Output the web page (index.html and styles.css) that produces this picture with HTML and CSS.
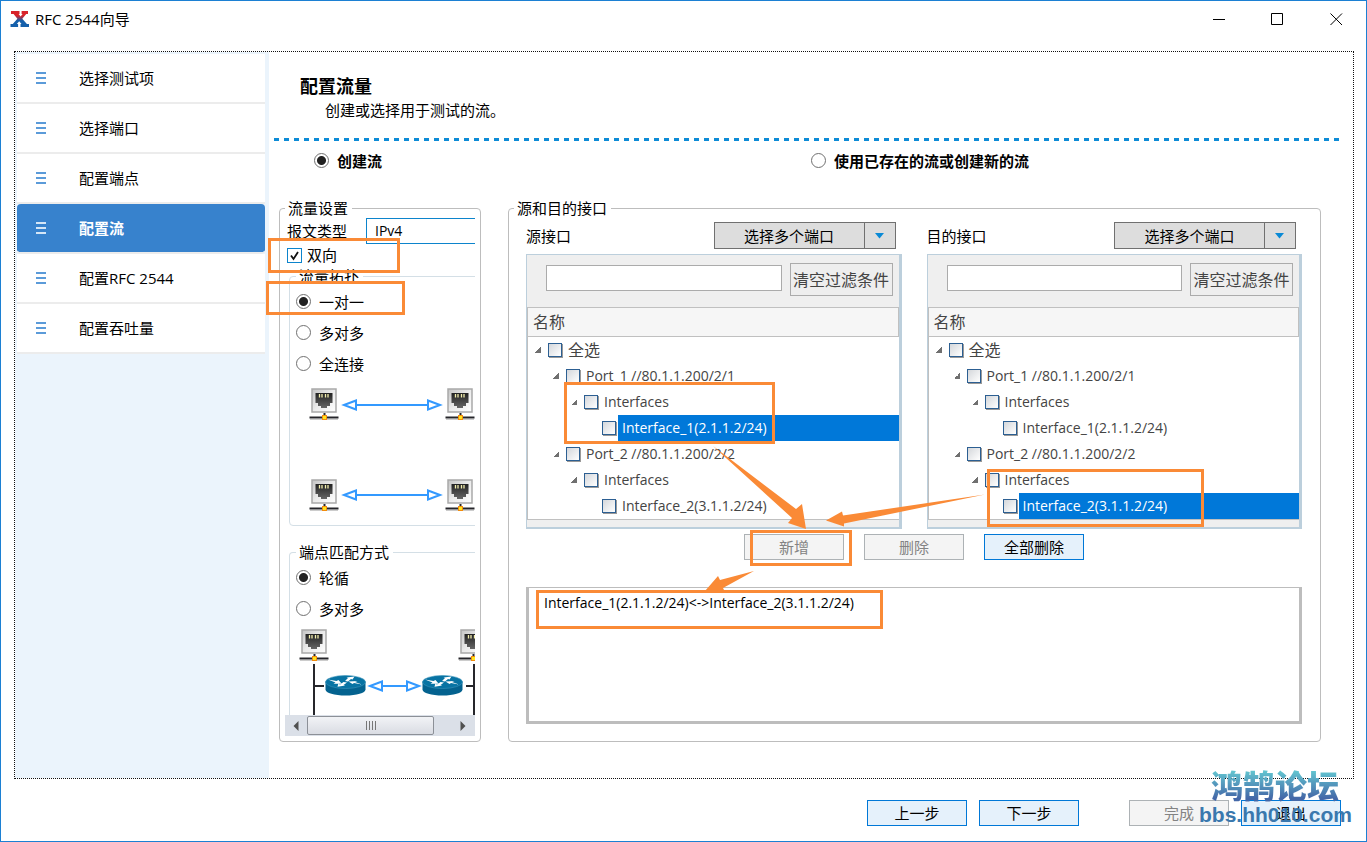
FILE: index.html
```html
<!DOCTYPE html>
<html lang="zh-CN">
<head>
<meta charset="utf-8">
<title>RFC 2544向导</title>
<link rel="stylesheet" href="styles.css">
</head>
<body>
<svg class="defs" aria-hidden="true">
  <defs>
    <linearGradient id="plate" x1="0" y1="0" x2="1" y2="1">
      <stop offset="0" stop-color="#c4c4c4"/><stop offset=".5" stop-color="#ebebeb"/><stop offset="1" stop-color="#fff"/>
    </linearGradient>
    <linearGradient id="jack" x1="0" y1="0" x2="0" y2="1">
      <stop offset="0" stop-color="#222"/><stop offset="1" stop-color="#666"/>
    </linearGradient>
    <linearGradient id="logo" x1="0" y1="0" x2="0" y2="1">
      <stop offset="0.3" stop-color="#d8232a"/><stop offset="0.6" stop-color="#1560ab"/>
    </linearGradient>
    <symbol id="port" viewBox="0 0 30 33" overflow="visible">
      <path d="M15.500 25v5" stroke="#26262b" stroke-width="2"/>
      <path d="M.5 29.500h29" stroke="#26262b" stroke-width="2"/>
      <path d="M1 31.500h28" stroke="#ccc" stroke-width="1"/>
      <rect x="3" y="1" width="24" height="23" fill="url(#plate)" stroke="#a9a9a9" stroke-width="1.500"/>
      <path d="M6.500 5h17v10h-2.500v3h-3v2h-6v-2h-3v-3H6.500z" fill="url(#jack)"/>
      <path d="M10.500 6v3.500M13 6v3.500M16.500 6v3.500M19 6v3.500" stroke="#f3efae" stroke-width="1.300"/>
      <rect x="13" y="27" width="5" height="5" fill="#f28c0c"/><rect x="14" y="28" width="3" height="3" fill="#ffe51e"/>
    </symbol>
    <symbol id="router" viewBox="0 0 41 21" overflow="visible">
      <path d="M.5 6.500v8c0 3.500 9 6 20 6s20-2.500 20-6v-8z" fill="#04628f"/>
      <ellipse cx="20.500" cy="7" rx="20" ry="6.500" fill="#0873a3" stroke="#3b93bb" stroke-width=".6"/>
      <path d="M3 4.500l8.500 1.500 2-1 3 3.500-8 .2 2-1.200zM20 6l3-3-1.500-.6 8-1-2 3-1.500-.4-3 2.600zM37 9.500l-8-1.400-1.500 1-4-2.600 9-.6-2.500 1.200zM22 7.500l-3.500 2.600 1.800.5-7.800 1.200.8-3 1.800.6 3.400-2.400z" fill="#fff"/>
    </symbol>
  </defs>
</svg>

<div class="window">
  <header class="titlebar">
    <svg class="logo" viewBox="0 0 20 18" aria-hidden="true"><path d="M1 1h8.500v3H8.600l2 2.600L12.600 4h-1V1H18v3h-1.800l-3.900 4.800 4.600 5.200H19v3h-8.500v-3h1l-2.300-2.800L6.800 14h1.300v3H.5v-3h2.300l4.600-5.300L3.600 4H1z" fill="url(#logo)"/></svg>
    <h1 class="window-title">RFC 2544向导</h1>
    <button class="win-btn" type="button" aria-label="最小化"><svg viewBox="0 0 13 13"><path d="M1 6.500h12"/></svg></button>
    <button class="win-btn" type="button" aria-label="最大化"><svg viewBox="0 0 13 13"><path d="M.5.5h11v11H.5z"/></svg></button>
    <button class="win-btn" type="button" aria-label="关闭"><svg viewBox="0 0 13 13"><path d="M.5.500l11.500 11.500M12 .500l-11.500 11.500"/></svg></button>
  </header>

  <div class="wizard">
    <nav class="steps">
      <a class="step" href="#"><span class="bars"></span>选择测试项</a>
      <a class="step" href="#"><span class="bars"></span>选择端口</a>
      <a class="step" href="#"><span class="bars"></span>配置端点</a>
      <a class="step active" href="#" aria-current="step"><span class="bars"></span>配置流</a>
      <a class="step" href="#"><span class="bars"></span>配置RFC 2544</a>
      <a class="step" href="#"><span class="bars"></span>配置吞吐量</a>
    </nav>

    <main class="page">
      <h2 class="page-title">配置流量</h2>
      <p class="page-note">创建或选择用于测试的流。</p>
      <div class="divider"></div>
      <div class="modes">
        <label class="option"><input class="radio" type="radio" name="mode" checked>创建流</label>
        <label class="option"><input class="radio" type="radio" name="mode">使用已存在的流或创建新的流</label>
      </div>

      <div class="panels">
        <fieldset class="group settings">
          <legend>流量设置</legend>
          <div class="clip">
            <div class="type-row">
              <label for="ptype">报文类型</label>
              <select class="type-select" id="ptype"><option>IPv4</option></select>
            </div>
            <label class="both"><input class="check" type="checkbox" checked>双向</label>
            <fieldset class="group inner topology">
              <legend>流量拓扑</legend>
              <label class="option"><input class="radio" type="radio" name="topo" checked>一对一</label>
              <label class="option"><input class="radio" type="radio" name="topo">多对多</label>
              <label class="option"><input class="radio" type="radio" name="topo">全连接</label>
              <svg class="diagram" width="180" height="146" viewBox="296 379 180 146" aria-hidden="true">
                <use href="#port" x="309" y="388" width="30" height="33"/>
                <use href="#port" x="445" y="388" width="30" height="33"/>
                <use href="#port" x="309" y="479" width="30" height="33"/>
                <use href="#port" x="445" y="479" width="30" height="33"/>
                <g fill="#fff" stroke="#3399ff" stroke-width="2">
                  <path d="M356 405h71"/><path d="M344 405l12-4.500v9z"/><path d="M440 405l-12-4.500v9z"/>
                  <path d="M356 495h71"/><path d="M344 495l12-4.500v9z"/><path d="M440 495l-12-4.500v9z"/>
                </g>
              </svg>
            </fieldset>
            <fieldset class="group inner matching">
              <legend>端点匹配方式</legend>
              <label class="option"><input class="radio" type="radio" name="match" checked>轮循</label>
              <label class="option"><input class="radio" type="radio" name="match">多对多</label>
              <svg class="diagram" width="180" height="91" viewBox="296 624 180 91" aria-hidden="true">
                <path d="M314 664v51M314 686h10M474 664v51M466 686h8" stroke="#26262b" stroke-width="2" fill="none"/>
                <use href="#port" x="299" y="629" width="30" height="33"/>
                <use href="#port" x="458" y="629" width="30" height="33"/>
                <use href="#router" x="325" y="675" width="41" height="21"/>
                <use href="#router" x="422" y="675" width="41" height="21"/>
                <g fill="#fff" stroke="#3399ff" stroke-width="2">
                  <path d="M382 686h25"/><path d="M370 686l12-4.500v9z"/><path d="M419 686l-12-4.500v9z"/>
                </g>
              </svg>
            </fieldset>
            <div class="scrollbar">
              <svg width="6" height="10" viewBox="0 0 6 10" aria-hidden="true"><path d="M5.500 0v10L.5 5z" fill="#505050"/></svg>
              <div class="track"><div class="thumb"></div></div>
              <svg width="6" height="10" viewBox="0 0 6 10" aria-hidden="true"><path d="M.5 0v10l5-5z" fill="#505050"/></svg>
            </div>
          </div>
        </fieldset>

        <fieldset class="group endpoints">
          <legend>源和目的接口</legend>
          <div class="stack">
            <div class="columns">
              <section class="side">
                <div class="side-head">
                  <span>源接口</span>
                  <button class="split-main" type="button">选择多个端口</button>
                  <button class="split-drop" type="button" aria-label="展开"><svg width="10" height="6" viewBox="0 0 10 6"><path d="M0 0h9L4.500 5.500z" fill="#0a8ad6"/></svg></button>
                </div>
                <div class="tree-panel">
                  <div class="filter">
                    <input class="filter-input" type="text" aria-label="过滤源接口">
                    <button class="filter-clear" type="button">清空过滤条件</button>
                  </div>
                  <div class="tree-title">名称</div>
                  <div class="tree">
                    <div class="row l0"><i class="twist"></i><label><input class="box" type="checkbox"><span>全选</span></label></div>
                    <div class="row l1"><i class="twist"></i><label><input class="box" type="checkbox"><span>Port_1 //80.1.1.200/2/1</span></label></div>
                    <div class="row l2"><i class="twist"></i><label><input class="box" type="checkbox"><span>Interfaces</span></label></div>
                    <div class="row l3 selected"><label><input class="box" type="checkbox"><span>Interface_1(2.1.1.2/24)</span></label></div>
                    <div class="row l1"><i class="twist"></i><label><input class="box" type="checkbox"><span>Port_2 //80.1.1.200/2/2</span></label></div>
                    <div class="row l2"><i class="twist"></i><label><input class="box" type="checkbox"><span>Interfaces</span></label></div>
                    <div class="row l3"><label><input class="box" type="checkbox"><span>Interface_2(3.1.1.2/24)</span></label></div>
                  </div>
                </div>
              </section>
              <section class="side">
                <div class="side-head">
                  <span>目的接口</span>
                  <button class="split-main" type="button">选择多个端口</button>
                  <button class="split-drop" type="button" aria-label="展开"><svg width="10" height="6" viewBox="0 0 10 6"><path d="M0 0h9L4.500 5.500z" fill="#0a8ad6"/></svg></button>
                </div>
                <div class="tree-panel">
                  <div class="filter">
                    <input class="filter-input" type="text" aria-label="过滤目的接口">
                    <button class="filter-clear" type="button">清空过滤条件</button>
                  </div>
                  <div class="tree-title">名称</div>
                  <div class="tree">
                    <div class="row l0"><i class="twist"></i><label><input class="box" type="checkbox"><span>全选</span></label></div>
                    <div class="row l1"><i class="twist"></i><label><input class="box" type="checkbox"><span>Port_1 //80.1.1.200/2/1</span></label></div>
                    <div class="row l2"><i class="twist"></i><label><input class="box" type="checkbox"><span>Interfaces</span></label></div>
                    <div class="row l3"><label><input class="box" type="checkbox"><span>Interface_1(2.1.1.2/24)</span></label></div>
                    <div class="row l1"><i class="twist"></i><label><input class="box" type="checkbox"><span>Port_2 //80.1.1.200/2/2</span></label></div>
                    <div class="row l2"><i class="twist"></i><label><input class="box" type="checkbox"><span>Interfaces</span></label></div>
                    <div class="row l3 selected"><label><input class="box" type="checkbox"><span>Interface_2(3.1.1.2/24)</span></label></div>
                  </div>
                </div>
              </section>
            </div>
            <div class="actions">
              <button class="btn" type="button" disabled>新增</button>
              <button class="btn" type="button" disabled>删除</button>
              <button class="btn" type="button">全部删除</button>
            </div>
            <textarea class="pairs" aria-label="接口对" readonly>Interface_1(2.1.1.2/24)&lt;-&gt;Interface_2(3.1.1.2/24)</textarea>
          </div>
        </fieldset>
      </div>
    </main>
  </div>

  <footer class="footer">
    <button class="btn" type="button">上一步</button>
    <button class="btn" type="button">下一步</button>
    <button class="btn finish" type="button" disabled>完成</button>
    <button class="btn" type="button">退出</button>
  </footer>

  <svg class="marks" width="1367" height="842" viewBox="0 0 1367 842" aria-hidden="true">
    <g fill="none" stroke="#fa8a36" stroke-width="3">
      <rect x="269.500" y="239.500" width="129" height="32"/>
      <rect x="267.500" y="282.500" width="136" height="31"/>
      <rect x="565.500" y="383.500" width="208" height="59"/>
      <rect x="988.500" y="470.500" width="214" height="55"/>
      <rect x="751.500" y="531.500" width="99" height="33"/>
      <rect x="537.500" y="591.500" width="344" height="36"/>
    </g>
    <g fill="#fa8a36">
      <path d="M713 446L796 509l6-5 4 25-18-6 4-5-66-60z"/>
      <path d="M985 494.500L844 523.500l0 3-18-6 16-9 1 4z"/>
      <path d="M754 571l-31 17 1 2-19 1 13-15 2 4z"/>
    </g>
  </svg>
  <div class="watermark" aria-hidden="true">
    <div class="wm-name">鸿鹄论坛</div>
    <div class="wm-url">bbs.hh010.com</div>
  </div>
</div>
</body>
</html>
```
FILE: styles.css
```css
* { box-sizing: border-box; }

body {
  margin: 0;
  background: #fff;
  color: #000;
  font: 15px/20px "Open Sans", "Noto Sans CJK SC", sans-serif;
}

button, input, select, textarea { font: inherit; color: inherit; margin: 0; }
.defs { position: absolute; width: 0; height: 0; }

.window {
  position: relative;
  display: flex;
  flex-direction: column;
  min-height: 100vh;
  border: 1px solid #1c80d3;
}

.titlebar { display: flex; align-items: center; height: 36px; padding-left: 9px; margin-bottom: 14px; }
.logo { width: 20px; height: 18px; margin-right: 5px; }
.window-title { flex: 1; margin: 0; font-size: 15px; font-weight: 400; }
.win-btn { width: 59px; height: 36px; padding: 0; border: 0; background: none; display: flex; align-items: center; justify-content: center; }
.win-btn svg { width: 13px; height: 13px; fill: none; stroke: #000; }

.wizard {
  flex: 1;
  display: grid;
  grid-template-columns: 254px 1fr;
  margin: 0 12px 0 13px;
  border: 1px dotted #111;
}

.steps { background: #ebf4fc; padding: 2px 4px 0 2px; }
.step {
  display: flex;
  align-items: center;
  height: 50px;
  padding-left: 19px;
  background: #fff;
  border: solid #ececec;
  border-width: 0 0 2px;
  color: #000;
  text-decoration: none;
}
.bars {
  width: 10px;
  height: 12px;
  margin-right: 33px;
  border: solid #5b9bd9;
  border-width: 2px 0;
  background: linear-gradient(#5b9bd9, #5b9bd9) 0 3px / 10px 2px no-repeat;
}
.step.active {
  background: #3782cd;
  background-clip: padding-box;
  border-radius: 4px;
  color: #fff;
  font-weight: 700;
}
.step.active .bars { border-color: #d4e6f7; background-image: linear-gradient(#d4e6f7, #d4e6f7); }

.page { display: flex; flex-direction: column; min-width: 0; padding: 22px 13px 36px 5px; }
.page-title { margin: 0 0 0 26px; font-size: 18px; line-height: 24px; }
.page-note { margin: 0 0 16px 51px; line-height: 24px; }
.divider { height: 3px; background: repeating-linear-gradient(90deg, #0c8bd6 0 5px, transparent 5px 10px); }
.modes { display: grid; grid-template-columns: 497px 1fr; padding: 4px 0 22px 40px; font-weight: 700; }
.option { display: flex; align-items: center; gap: 8px; height: 31px; }

.radio, .check, .box { appearance: none; flex: none; background: #fff; }
.radio { width: 15px; height: 15px; border: 1px solid #707070; border-radius: 50%; }
.radio:checked { background: radial-gradient(circle, #222 0 4px, #fff 5px); }
.check {
  width: 15px;
  height: 15px;
  border: 1px solid #0c84cc;
  background: url("data:image/svg+xml,%3Csvg xmlns='http://www.w3.org/2000/svg' viewBox='0 0 13 13'%3E%3Cpath d='M3 6.500l2.500 3.500L10 3' fill='none' stroke='%23111' stroke-width='1.800'/%3E%3C/svg%3E");
}

.panels { flex: 1; display: grid; grid-template-columns: 202px 1fr; gap: 27px; padding: 0 19px 0 5px; }
.group { min-width: 0; margin: 0; padding: 0; border: 1px solid #bdbdbd; border-radius: 4px; }
.group legend { padding: 0 4px 0 3px; line-height: 20px; }

.settings { padding: 0 5px 5px; }
.clip { overflow: hidden; }
.type-row { display: flex; align-items: center; padding-left: 2px; height: 26px; }
.type-row label { flex: none; width: 79px; }
.type-select { appearance: none; flex: none; width: 160px; height: 26px; padding: 0 8px; border: 1px solid #0c84cc; border-radius: 0; background: #fff; font-size: 14px; }
.both { display: flex; align-items: center; gap: 5px; height: 22px; padding-left: 2px; }
.inner { width: 250px; margin-left: 4px; padding-left: 6px; border-color: #d4dfe6; }
.diagram { display: block; }
.matching { margin-top: 16px; border-bottom: 0; border-radius: 4px 4px 0 0; }

.scrollbar { display: flex; align-items: center; height: 21px; padding: 0 9px 0 8px; gap: 8px; background: #dbe0e8; }
.scrollbar svg { flex: none; }
.track { flex: 1; }
.thumb {
  width: 127px;
  height: 19px;
  border: 1px solid #8c9097;
  border-radius: 2px;
  background:
    repeating-linear-gradient(90deg, #777 0 1px, transparent 1px 3px) 58px 4px / 10px 9px no-repeat,
    linear-gradient(#f2f3f6, #d9dce3);
}

.endpoints { padding: 0 18px 17px 5px; }
.stack { display: flex; flex-direction: column; height: 100%; padding: 4px 0 0 12px; }
.columns { display: grid; grid-template-columns: 1fr 1fr; gap: 25px; }
.side { min-width: 0; }
.side-head { display: flex; align-items: center; height: 27px; margin-bottom: 5px; padding-right: 6px; }
.side-head span { flex: 1; }
.split-main, .split-drop { height: 27px; padding: 0; border: 1px solid #707070; background: #ddd; }
.split-main { width: 151px; }
.split-drop { width: 32px; margin-left: -1px; display: flex; align-items: center; justify-content: center; }

.tree-panel { padding-bottom: 7px; border: solid #bccfdc; border-width: 1px 3px 2px 1px; background: #efefef; }
.filter { display: flex; align-items: flex-start; height: 52px; padding: 8px 6px 0 19px; gap: 8px; }
.filter-input { flex: 1; min-width: 0; height: 26px; margin-top: 2px; padding: 0 4px; border: 1px solid #ababab; background: #fff; }
.filter-clear { width: 103px; height: 33px; padding: 0; border: 1px solid #ababab; background: #eee; color: #444; font-size: 16px; white-space: nowrap; }
.tree-title { height: 30px; padding-left: 5px; border: 1px solid #c0c0c0; background: #f6f6f6; color: #444; font-size: 16px; line-height: 28px; }
.tree { border: solid #c0c0c0; border-width: 0 0 1px 1px; background: #fff; color: #444; font-size: 14px; }
.row { display: flex; align-items: center; height: 26px; }
.row label { flex: 1; display: flex; align-items: center; }
.row span { flex: 1; padding-left: 4px; line-height: 26px; white-space: nowrap; }
.l0 { padding-left: 7px; font-size: 16px; }
.l1 { padding-left: 25px; }
.l2 { padding-left: 43px; }
.l3 { padding-left: 74px; }
.selected span { background: #0078d9; color: #fff; }
.twist { flex: none; width: 6px; height: 6px; margin-right: 7px; background: linear-gradient(135deg, transparent 50%, #707070 50%); }
.box {
  width: 14px;
  height: 14px;
  margin-right: 2px;
  border: 1px solid #2c5f92;
  background: linear-gradient(135deg, #d4d7db, #fff);
  box-shadow: 1px 1px 0 #999;
}

.actions { display: flex; justify-content: center; gap: 20px; margin: 5px 0 27px; }
.btn { width: 100px; height: 26px; padding: 0; border: 1px solid #0078d7; background: #e5f1fb; line-height: 22px; }
.btn:disabled { border-color: #adb2b5; background: #f4f4f4; color: #838383; }

.pairs {
  flex: 1;
  min-height: 80px;
  width: 100%;
  padding: 5px 15px;
  border: solid #bdbdbd;
  border-width: 1px 3px 3px;
  outline: 0;
  resize: none;
  font-size: 14px;
}

.footer { display: flex; justify-content: flex-end; gap: 12px; height: 62px; padding: 21px 25px 0; }
.finish { margin-left: 38px; }

.marks { position: absolute; top: -1px; left: -1px; pointer-events: none; }

.watermark { position: absolute; right: 15px; bottom: 13px; width: 152px; text-align: center; pointer-events: none; }
.wm-name {
  font: 900 32px/36px "Noto Sans CJK SC", sans-serif;
  background: linear-gradient(#62c3cf 15%, #4468a8 90%);
  background-clip: text;
  color: transparent;
}
.wm-url { font: 700 21px/26px "Liberation Sans", sans-serif; color: #3a78ae; }
```
